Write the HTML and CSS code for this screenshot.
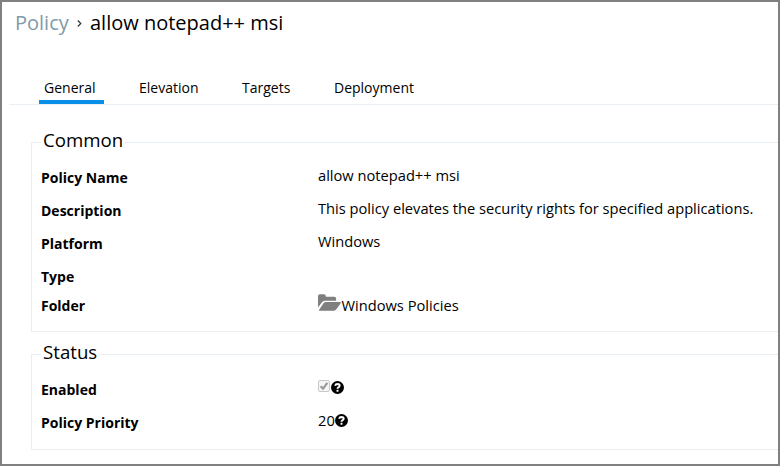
FILE: index.html
```
<!DOCTYPE html>
<html lang="en">
<head>
<meta charset="utf-8">
<title>Policy</title>
<link rel="stylesheet" href="styles.css">
</head>
<body>
<main class="page">
  <h1 class="crumbs"><a class="crumb-parent">Policy</a><svg class="chevron" viewBox="0 0 5 7"><path d="M.8.5 3.8 3.5.8 6.5"/></svg><span class="crumb-current">allow notepad++ msi</span></h1>
  <nav class="tabs">
    <a class="tab active">General</a><a class="tab elevation">Elevation</a><a class="tab targets">Targets</a><a class="tab deployment">Deployment</a>
  </nav>
  <section class="group common">
    <h2 class="legend"><span>Common</span></h2>
    <dl class="rows">
      <div class="row"><dt>Policy Name</dt><dd><span>allow notepad++ msi</span></dd></div>
      <div class="row"><dt>Description</dt><dd><span>This policy elevates the security rights for specified applications.</span></dd></div>
      <div class="row"><dt>Platform</dt><dd><span>Windows</span></dd></div>
      <div class="row type"><dt>Type</dt><dd></dd></div>
      <div class="row folder-row"><dt>Folder</dt><dd><svg class="folder" viewBox="0 0 24 17"><path d="M0 14V2Q0 0 2 0H6Q8 0 8 2V2.5H16.5Q18.5 2.5 18.5 4.5V6.6H7.3Q5.6 6.6 4.3 8.1L0 13.5ZM1 16.1 5.8 9.1Q6.7 7.9 8.1 7.9H22.2Q24 7.9 23 9.4L19.2 15Q18.2 16.8 16.6 16.8H1.4Q.5 16.8 1 16.1Z"/></svg><span>Windows Policies</span></dd></div>
    </dl>
  </section>
  <section class="group status">
    <h2 class="legend"><span>Status</span></h2>
    <dl class="rows">
      <div class="row"><dt>Enabled</dt><dd><svg class="check" viewBox="0 0 12 12"><rect x=".5" y=".5" width="11" height="11" rx="1.5"/><path d="M2.6 6.2 5 8.6 9.4 2.8"/></svg><svg class="help enabled-help" viewBox="0 0 13 13"><circle cx="6.5" cy="6.5" r="6.5"/><path d="M4.1 4.8Q4.6 3 6.5 3 8.7 3.1 8.7 4.8 8.7 5.7 7.4 6.4 6.5 6.9 6.5 7.8M6.5 8.8V10.7"/></svg></dd></div>
      <div class="row"><dt>Policy Priority</dt><dd><span>20</span><svg class="help" viewBox="0 0 13 13"><circle cx="6.5" cy="6.5" r="6.5"/><path d="M4.1 4.8Q4.6 3 6.5 3 8.7 3.1 8.7 4.8 8.7 5.7 7.4 6.4 6.5 6.9 6.5 7.8M6.5 8.8V10.7"/></svg></dd></div>
    </dl>
  </section>
</main>
</body>
</html>
```
FILE: styles.css
```
* { box-sizing: border-box; }
body { margin: 0; background: #fff; color: #000; font: 14px/20px "Open Sans", sans-serif; }
h1, h2, dl, dd { margin: 0; }
.page { height: 466px; border: 2px solid #808080; overflow: hidden; }
.crumbs { display: flex; height: 42px; padding-left: 13px; font-size: 20px; line-height: 42px; font-weight: 400; white-space: nowrap; }
.crumb-parent { width: 54px; color: #829aa8; }
.chevron { flex: none; width: 5px; height: 7px; margin: 18px 8px 0 8px; fill: none; stroke: #333; stroke-width: 1.2; }
.tabs { display: flex; height: 61px; margin: 0 0 0 7px; padding: 25px 0 0 30px; border-bottom: 1px solid #e9eff4; }
.tab { height: 35px; padding: 9px 5px 0; line-height: 20px; white-space: nowrap; }
.active { width: 65px; border-bottom: 4px solid #0a8fe8; }
.elevation { margin-left: 30px; width: 70px; }
.targets { margin-left: 33px; width: 60px; }
.deployment { margin-left: 32px; }
.group { margin-left: 29px; border: 1px solid #ebedef; border-top-color: #e6eff5; border-right: 0; }
.common { height: 190px; margin-top: 37px; }
.status { height: 96px; margin-top: 22px; }
.legend { height: 25px; margin-top: -16px; padding-left: 9px; font-size: 18.67px; line-height: 26px; font-weight: 400; }
.legend span { display: inline-block; padding: 0 2px; background: #fff; }
.rows { padding: 10px 0 0 9px; }
.row { display: grid; grid-template-columns: 277px 1fr; height: 33px; }
dt { padding-top: 6px; font-weight: 700; line-height: 20px; }
dd { display: flex; padding-top: 3px; font-size: 14.67px; line-height: 20px; white-space: nowrap; }
.type { height: 31px; }
.folder-row dt { padding-top: 4px; }
.folder { width: 23.5px; height: 17px; margin-top: -1px; fill: #7f7f7f; }
.check { width: 12px; height: 12px; margin-top: 3px; }
.check rect { fill: #f5f5f5; stroke: #c8c8c8; }
.check path { fill: none; stroke: #999; stroke-width: 2.2; }
.help { width: 13px; height: 13px; margin-top: 4px; }
.enabled-help { margin: 4px 0 0 1px; }
.help path { fill: none; stroke: #fff; stroke-width: 1.9; }
```
